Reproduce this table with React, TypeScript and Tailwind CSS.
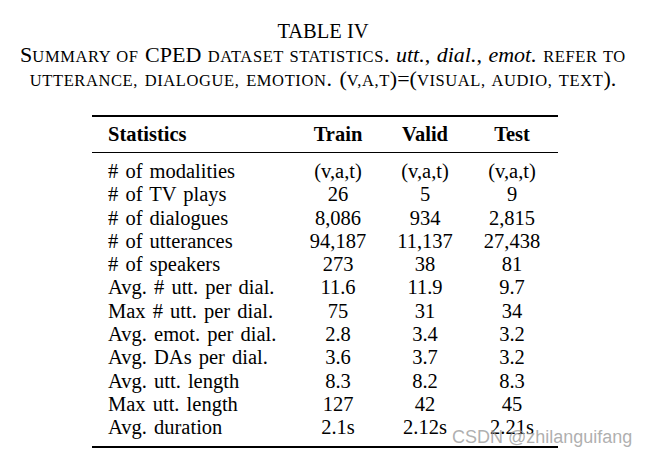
import React from 'react';

interface StatRow {
  label: string;
  train: string;
  valid: string;
  test: string;
}

const rows: StatRow[] = [
  { label: '# of modalities', train: '(v,a,t)', valid: '(v,a,t)', test: '(v,a,t)' },
  { label: '# of TV plays', train: '26', valid: '5', test: '9' },
  { label: '# of dialogues', train: '8,086', valid: '934', test: '2,815' },
  { label: '# of utterances', train: '94,187', valid: '11,137', test: '27,438' },
  { label: '# of speakers', train: '273', valid: '38', test: '81' },
  { label: 'Avg. # utt. per dial.', train: '11.6', valid: '11.9', test: '9.7' },
  { label: 'Max # utt. per dial.', train: '75', valid: '31', test: '34' },
  { label: 'Avg. emot. per dial.', train: '2.8', valid: '3.4', test: '3.2' },
  { label: 'Avg. DAs per dial.', train: '3.6', valid: '3.7', test: '3.2' },
  { label: 'Avg. utt. length', train: '8.3', valid: '8.2', test: '8.3' },
  { label: 'Max utt. length', train: '127', valid: '42', test: '45' },
  { label: 'Avg. duration', train: '2.1s', valid: '2.12s', test: '2.21s' },
];

const gridCols = 'grid grid-cols-[200px_92px_82px_92px]';

// small caps drawn by hand, the synthesized ones come out too small
const Sc: React.FC<{ children: React.ReactNode }> = ({ children }) => (
  <span className="text-[16.5px] leading-none uppercase tracking-[0.6px]">{children}</span>
);

const App: React.FC = () => {
  return (
    <div className="relative w-[646px] h-[456px] bg-white text-black font-['Liberation_Serif','Times_New_Roman',serif] text-[20.5px] overflow-hidden">
      {/* caption */}
      <div className="pt-[19px] text-center leading-[24px]">
        <div>TABLE IV</div>
        <div className="text-[22px] [word-spacing:2px] whitespace-nowrap">
          <span className="[word-spacing:1px]">
            S<Sc>ummary of</Sc> CPED <Sc>dataset statistics</Sc>.{' '}
            <span className="italic">utt.</span>, <span className="italic">dial.</span>,{' '}
            <span className="italic">emot.</span> <Sc>refer to</Sc>
          </span>
          <br />
          <Sc>utterance, dialogue, emotion</Sc>. (<Sc>v,a,t</Sc>)=(<Sc>visual, audio, text</Sc>).
        </div>
      </div>

      {/* table */}
      <div className="ml-[92px] mt-[24px] w-[466px]">
        <div className="h-[2px] bg-black" />
        <div className={`${gridCols} h-[35px] items-center font-bold`}>
          <div className="pl-[16px]">Statistics</div>
          <div className="text-center">Train</div>
          <div className="text-center">Valid</div>
          <div className="text-center">Test</div>
        </div>
        <div className="h-px bg-black" />
        <div className="pt-[7px] pb-[6px] leading-[23.3px]">
          {rows.map((r) => (
            <div key={r.label} className={gridCols}>
              <div className="pl-[16px] whitespace-nowrap [word-spacing:2px]">{r.label}</div>
              <div className="text-center">{r.train}</div>
              <div className="text-center">{r.valid}</div>
              <div className="text-center">{r.test}</div>
            </div>
          ))}
        </div>
        <div className="h-[2px] bg-black" />
      </div>

      {/* watermark */}
      <div className="absolute left-[452px] top-[425px] text-[18px] leading-[24px] text-[#9a9a9a]/80 font-['Liberation_Sans',Arial,sans-serif]">
        CSDN @zhilanguifang
      </div>
    </div>
  );
};

export default App;
